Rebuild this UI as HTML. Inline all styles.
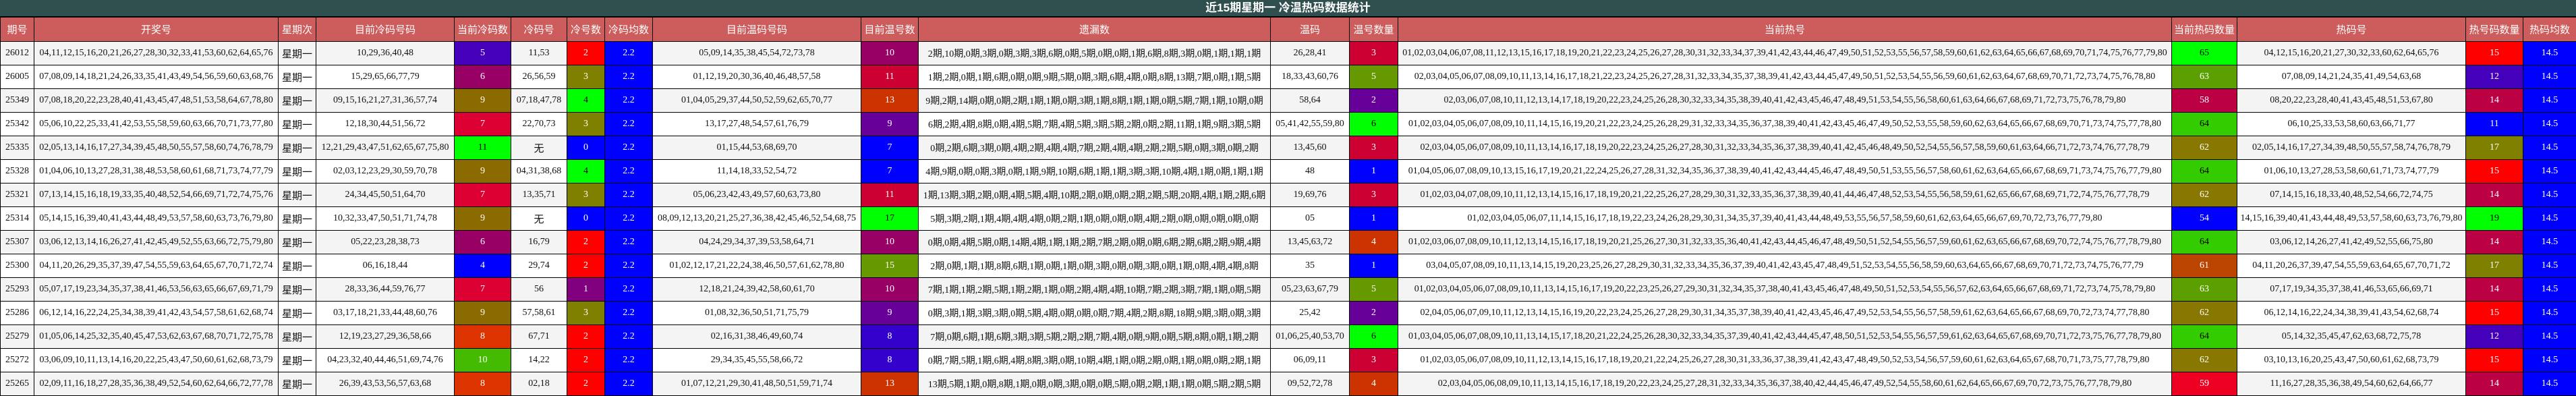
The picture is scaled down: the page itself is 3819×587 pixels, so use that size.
<!DOCTYPE html>
<html><head><meta charset="utf-8">
<style>
html,body{margin:0;padding:0;background:#fff;}
body{width:3819px;height:587px;overflow:hidden;}
.title{height:24px;background:#2f4f4f;border-bottom:1px solid #000;color:#fff;font:bold 17px "Liberation Sans","Noto Sans CJK SC",sans-serif;text-align:center;line-height:24px;}
table{border-collapse:collapse;table-layout:fixed;width:3819px;}
th{background:#cd5c5c;color:#fff;font:15px "Liberation Sans","Noto Sans CJK SC",sans-serif;height:35px;padding:0;border:1px solid #000;font-weight:normal;white-space:nowrap;overflow:hidden;}
td{height:34px;padding:0;border:1px solid #000;text-align:center;font:14px "Liberation Serif","Noto Sans CJK SC",serif;color:#111;white-space:nowrap;overflow:hidden;}
tr:nth-child(odd) td{background:#f4f4f4;}
tr:nth-child(even) td{background:#fff;}
td.wk{font:15px "Liberation Sans","Noto Sans CJK SC",sans-serif;}
td.c{color:#fff;}
tr td.pb{background:#4400bb}tr td.mg{background:#990066}tr td.br{background:#8b6b00}tr td.cr{background:#dd0033}
tr td.g{background:#00ff00;color:#000}tr td.b{background:#0000ff}tr td.or{background:#dd3300}tr td.lg{background:#44bb00}
tr td.r{background:#ff0000}tr td.ol{background:#808000}tr td.pu{background:#800080}tr td.rr{background:#cc0033}
tr td.ro{background:#cc3300}tr td.vi{background:#660099}tr td.og{background:#669900}tr td.ib{background:#3300cc}
tr td.hg{background:#5ba000}tr td.mr{background:#bb0044}tr td.g2{background:#33cc00;color:#000}tr td.ho{background:#887700}
tr td.bo{background:#bb4400}tr td.er{background:#ee0022}
</style></head><body>
<div class="title">近15期星期一 冷温热码数据统计</div>
<table>
<colgroup><col style="width:50px"><col style="width:362px"><col style="width:56px"><col style="width:205px"><col style="width:84px"><col style="width:83px"><col style="width:56px"><col style="width:71px"><col style="width:309px"><col style="width:85px"><col style="width:522px"><col style="width:117px"><col style="width:72px"><col style="width:1147px"><col style="width:97px"><col style="width:339px"><col style="width:85px"><col style="width:79px"></colgroup>
<thead><tr><th>期号</th><th>开奖号</th><th>星期次</th><th>目前冷码号码</th><th>当前冷码数</th><th>冷码号</th><th>冷号数</th><th>冷码均数</th><th>目前温码号码</th><th>目前温号数</th><th>遗漏数</th><th>温码</th><th>温号数量</th><th>当前热号</th><th>当前热码数量</th><th>热码号</th><th>热号码数量</th><th>热码均数</th></tr></thead>
<tbody>
<tr><td>26012</td><td>04,11,12,15,16,20,21,26,27,28,30,32,33,41,53,60,62,64,65,76</td><td class="wk">星期一</td><td>10,29,36,40,48</td><td class="c pb">5</td><td>11,53</td><td class="c r">2</td><td class="c b">2.2</td><td>05,09,14,35,38,45,54,72,73,78</td><td class="c mg">10</td><td>2期,10期,0期,3期,0期,3期,3期,6期,0期,5期,0期,0期,1期,6期,8期,3期,0期,1期,1期,1期</td><td>26,28,41</td><td class="c rr">3</td><td>01,02,03,04,06,07,08,11,12,13,15,16,17,18,19,20,21,22,23,24,25,26,27,28,30,31,32,33,34,37,39,41,42,43,44,46,47,49,50,51,52,53,55,56,57,58,59,60,61,62,63,64,65,66,67,68,69,70,71,74,75,76,77,79,80</td><td class="g">65</td><td>04,12,15,16,20,21,27,30,32,33,60,62,64,65,76</td><td class="c r">15</td><td class="c b">14.5</td></tr>
<tr><td>26005</td><td>07,08,09,14,18,21,24,26,33,35,41,43,49,54,56,59,60,63,68,76</td><td class="wk">星期一</td><td>15,29,65,66,77,79</td><td class="c mg">6</td><td>26,56,59</td><td class="c ol">3</td><td class="c b">2.2</td><td>01,12,19,20,30,36,40,46,48,57,58</td><td class="c rr">11</td><td>1期,2期,0期,1期,6期,0期,0期,9期,5期,0期,3期,6期,4期,0期,8期,13期,7期,0期,1期,5期</td><td>18,33,43,60,76</td><td class="c og">5</td><td>02,03,04,05,06,07,08,09,10,11,13,14,16,17,18,21,22,23,24,25,26,27,28,31,32,33,34,35,37,38,39,41,42,43,44,45,47,49,50,51,52,53,54,55,56,59,60,61,62,63,64,67,68,69,70,71,72,73,74,75,76,78,80</td><td class="c hg">63</td><td>07,08,09,14,21,24,35,41,49,54,63,68</td><td class="c pb">12</td><td class="c b">14.5</td></tr>
<tr><td>25349</td><td>07,08,18,20,22,23,28,40,41,43,45,47,48,51,53,58,64,67,78,80</td><td class="wk">星期一</td><td>09,15,16,21,27,31,36,57,74</td><td class="c br">9</td><td>07,18,47,78</td><td class="g">4</td><td class="c b">2.2</td><td>01,04,05,29,37,44,50,52,59,62,65,70,77</td><td class="c ro">13</td><td>9期,2期,14期,0期,0期,2期,1期,1期,0期,3期,1期,8期,1期,1期,0期,5期,7期,1期,10期,0期</td><td>58,64</td><td class="c vi">2</td><td>02,03,06,07,08,10,11,12,13,14,17,18,19,20,22,23,24,25,26,28,30,32,33,34,35,38,39,40,41,42,43,45,46,47,48,49,51,53,54,55,56,58,60,61,63,64,66,67,68,69,71,72,73,75,76,78,79,80</td><td class="c mr">58</td><td>08,20,22,23,28,40,41,43,45,48,51,53,67,80</td><td class="c mr">14</td><td class="c b">14.5</td></tr>
<tr><td>25342</td><td>05,06,10,22,25,33,41,42,53,55,58,59,60,63,66,70,71,73,77,80</td><td class="wk">星期一</td><td>12,18,30,44,51,56,72</td><td class="c cr">7</td><td>22,70,73</td><td class="c ol">3</td><td class="c b">2.2</td><td>13,17,27,48,54,57,61,76,79</td><td class="c vi">9</td><td>6期,2期,4期,8期,0期,4期,5期,7期,4期,5期,3期,5期,2期,0期,2期,11期,1期,9期,3期,5期</td><td>05,41,42,55,59,80</td><td class="g">6</td><td>01,02,03,04,05,06,07,08,09,10,11,14,15,16,19,20,21,22,23,24,25,26,28,29,31,32,33,34,35,36,37,38,39,40,41,42,43,45,46,47,49,50,52,53,55,58,59,60,62,63,64,65,66,67,68,69,70,71,73,74,75,77,78,80</td><td class="g2">64</td><td>06,10,25,33,53,58,60,63,66,71,77</td><td class="c b">11</td><td class="c b">14.5</td></tr>
<tr><td>25335</td><td>02,05,13,14,16,17,27,34,39,45,48,50,55,57,58,60,74,76,78,79</td><td class="wk">星期一</td><td>12,21,29,43,47,51,62,65,67,75,80</td><td class="g">11</td><td class="wk">无</td><td class="c b">0</td><td class="c b">2.2</td><td>01,15,44,53,68,69,70</td><td class="c b">7</td><td>0期,2期,6期,3期,0期,4期,2期,4期,4期,7期,2期,4期,4期,2期,2期,5期,0期,3期,0期,2期</td><td>13,45,60</td><td class="c rr">3</td><td>02,03,04,05,06,07,08,09,10,11,13,14,16,17,18,19,20,22,23,24,25,26,27,28,30,31,32,33,34,35,36,37,38,39,40,41,42,45,46,48,49,50,52,54,55,56,57,58,59,60,61,63,64,66,71,72,73,74,76,77,78,79</td><td class="c ho">62</td><td>02,05,14,16,17,27,34,39,48,50,55,57,58,74,76,78,79</td><td class="c ol">17</td><td class="c b">14.5</td></tr>
<tr><td>25328</td><td>01,04,06,10,13,27,28,31,38,48,53,58,60,61,68,71,73,74,77,79</td><td class="wk">星期一</td><td>02,03,12,23,29,30,59,70,78</td><td class="c br">9</td><td>04,31,38,68</td><td class="g">4</td><td class="c b">2.2</td><td>11,14,18,33,52,54,72</td><td class="c b">7</td><td>4期,9期,0期,0期,3期,0期,1期,9期,10期,6期,1期,1期,3期,3期,10期,4期,1期,0期,1期,1期</td><td>48</td><td class="c b">1</td><td>01,04,05,06,07,08,09,10,13,15,16,17,19,20,21,22,24,25,26,27,28,31,32,34,35,36,37,38,39,40,41,42,43,44,45,46,47,48,49,50,51,53,55,56,57,58,60,61,62,63,64,65,66,67,68,69,71,73,74,75,76,77,79,80</td><td class="g2">64</td><td>01,06,10,13,27,28,53,58,60,61,71,73,74,77,79</td><td class="c r">15</td><td class="c b">14.5</td></tr>
<tr><td>25321</td><td>07,13,14,15,16,18,19,33,35,40,48,52,54,66,69,71,72,74,75,76</td><td class="wk">星期一</td><td>24,34,45,50,51,64,70</td><td class="c cr">7</td><td>13,35,71</td><td class="c ol">3</td><td class="c b">2.2</td><td>05,06,23,42,43,49,57,60,63,73,80</td><td class="c rr">11</td><td>1期,13期,3期,2期,0期,4期,5期,4期,10期,2期,0期,0期,2期,2期,5期,20期,4期,1期,2期,6期</td><td>19,69,76</td><td class="c rr">3</td><td>01,02,03,04,07,08,09,10,11,12,13,14,15,16,17,18,19,20,21,22,25,26,27,28,29,30,31,32,33,35,36,37,38,39,40,41,44,46,47,48,52,53,54,55,56,58,59,61,62,65,66,67,68,69,71,72,74,75,76,77,78,79</td><td class="c ho">62</td><td>07,14,15,16,18,33,40,48,52,54,66,72,74,75</td><td class="c mr">14</td><td class="c b">14.5</td></tr>
<tr><td>25314</td><td>05,14,15,16,39,40,41,43,44,48,49,53,57,58,60,63,73,76,79,80</td><td class="wk">星期一</td><td>10,32,33,47,50,51,71,74,78</td><td class="c br">9</td><td class="wk">无</td><td class="c b">0</td><td class="c b">2.2</td><td>08,09,12,13,20,21,25,27,36,38,42,45,46,52,54,68,75</td><td class="g">17</td><td>5期,3期,2期,1期,4期,4期,4期,0期,2期,1期,0期,0期,0期,4期,2期,0期,0期,0期,0期,0期</td><td>05</td><td class="c b">1</td><td>01,02,03,04,05,06,07,11,14,15,16,17,18,19,22,23,24,26,28,29,30,31,34,35,37,39,40,41,43,44,48,49,53,55,56,57,58,59,60,61,62,63,64,65,66,67,69,70,72,73,76,77,79,80</td><td class="c b">54</td><td>14,15,16,39,40,41,43,44,48,49,53,57,58,60,63,73,76,79,80</td><td class="g">19</td><td class="c b">14.5</td></tr>
<tr><td>25307</td><td>03,06,12,13,14,16,26,27,41,42,45,49,52,55,63,66,72,75,79,80</td><td class="wk">星期一</td><td>05,22,23,28,38,73</td><td class="c mg">6</td><td>16,79</td><td class="c r">2</td><td class="c b">2.2</td><td>04,24,29,34,37,39,53,58,64,71</td><td class="c mg">10</td><td>0期,0期,4期,5期,0期,14期,4期,1期,1期,2期,7期,2期,0期,0期,6期,2期,6期,2期,9期,4期</td><td>13,45,63,72</td><td class="c ro">4</td><td>01,02,03,06,07,08,09,10,11,12,13,14,15,16,17,18,19,20,21,25,26,27,30,31,32,33,35,36,40,41,42,43,44,45,46,47,48,49,50,51,52,54,55,56,57,59,60,61,62,63,65,66,67,68,69,70,72,74,75,76,77,78,79,80</td><td class="g2">64</td><td>03,06,12,14,26,27,41,42,49,52,55,66,75,80</td><td class="c mr">14</td><td class="c b">14.5</td></tr>
<tr><td>25300</td><td>04,11,20,26,29,35,37,39,47,54,55,59,63,64,65,67,70,71,72,74</td><td class="wk">星期一</td><td>06,16,18,44</td><td class="c b">4</td><td>29,74</td><td class="c r">2</td><td class="c b">2.2</td><td>01,02,12,17,21,22,24,38,46,50,57,61,62,78,80</td><td class="c og">15</td><td>2期,0期,1期,1期,8期,6期,1期,0期,1期,0期,3期,0期,0期,3期,0期,1期,0期,4期,4期,8期</td><td>35</td><td class="c b">1</td><td>03,04,05,07,08,09,10,11,13,14,15,19,20,23,25,26,27,28,29,30,31,32,33,34,35,36,37,39,40,41,42,43,45,47,48,49,51,52,53,54,55,56,58,59,60,63,64,65,66,67,68,69,70,71,72,73,74,75,76,77,79</td><td class="c bo">61</td><td>04,11,20,26,37,39,47,54,55,59,63,64,65,67,70,71,72</td><td class="c ol">17</td><td class="c b">14.5</td></tr>
<tr><td>25293</td><td>05,07,17,19,23,34,35,37,38,41,46,53,56,63,65,66,67,69,71,79</td><td class="wk">星期一</td><td>28,33,36,44,59,76,77</td><td class="c cr">7</td><td>56</td><td class="c pu">1</td><td class="c b">2.2</td><td>12,18,21,24,39,42,58,60,61,70</td><td class="c mg">10</td><td>7期,1期,1期,2期,5期,1期,2期,1期,0期,2期,4期,4期,10期,7期,2期,3期,7期,1期,0期,5期</td><td>05,23,63,67,79</td><td class="c og">5</td><td>01,02,03,04,05,06,07,08,09,10,11,13,14,15,16,17,19,20,22,23,25,26,27,29,30,31,32,34,35,37,38,40,41,43,45,46,47,48,49,50,51,52,53,54,55,56,57,62,63,64,65,66,67,68,69,71,72,73,74,75,78,79,80</td><td class="c hg">63</td><td>07,17,19,34,35,37,38,41,46,53,65,66,69,71</td><td class="c mr">14</td><td class="c b">14.5</td></tr>
<tr><td>25286</td><td>06,12,14,16,22,24,25,34,38,39,41,42,43,54,57,58,61,62,68,74</td><td class="wk">星期一</td><td>03,17,18,21,33,44,48,60,76</td><td class="c br">9</td><td>57,58,61</td><td class="c ol">3</td><td class="c b">2.2</td><td>01,08,32,36,50,51,71,75,79</td><td class="c vi">9</td><td>0期,3期,1期,3期,3期,0期,5期,4期,0期,0期,0期,7期,4期,2期,8期,18期,9期,3期,0期,3期</td><td>25,42</td><td class="c vi">2</td><td>02,04,05,06,07,09,10,11,12,13,14,15,16,19,20,22,23,24,25,26,27,28,29,30,31,34,35,37,38,39,40,41,42,43,45,46,47,49,52,53,54,55,56,57,58,59,61,62,63,64,65,66,67,68,69,70,72,73,74,77,78,80</td><td class="c ho">62</td><td>06,12,14,16,22,24,34,38,39,41,43,54,62,68,74</td><td class="c r">15</td><td class="c b">14.5</td></tr>
<tr><td>25279</td><td>01,05,06,14,25,32,35,40,45,47,53,62,63,67,68,70,71,72,75,78</td><td class="wk">星期一</td><td>12,19,23,27,29,36,58,66</td><td class="c or">8</td><td>67,71</td><td class="c r">2</td><td class="c b">2.2</td><td>02,16,31,38,46,49,60,74</td><td class="c ib">8</td><td>7期,0期,6期,1期,6期,3期,3期,5期,2期,2期,7期,4期,0期,9期,0期,5期,8期,0期,1期,2期</td><td>01,06,25,40,53,70</td><td class="g">6</td><td>01,03,04,05,06,07,08,09,10,11,13,14,15,17,18,20,21,22,24,25,26,28,30,32,33,34,35,37,39,40,41,42,43,44,45,47,48,50,51,52,53,54,55,56,57,59,61,62,63,64,65,67,68,69,70,71,72,73,75,76,77,78,79,80</td><td class="g2">64</td><td>05,14,32,35,45,47,62,63,68,72,75,78</td><td class="c pb">12</td><td class="c b">14.5</td></tr>
<tr><td>25272</td><td>03,06,09,10,11,13,14,16,20,22,25,43,47,50,60,61,62,68,73,79</td><td class="wk">星期一</td><td>04,23,32,40,44,46,51,69,74,76</td><td class="c lg">10</td><td>14,22</td><td class="c r">2</td><td class="c b">2.2</td><td>29,34,35,45,55,58,66,72</td><td class="c ib">8</td><td>0期,7期,5期,1期,6期,4期,8期,3期,0期,10期,4期,1期,0期,2期,0期,1期,0期,0期,2期,1期</td><td>06,09,11</td><td class="c rr">3</td><td>01,02,03,05,06,07,08,09,10,11,12,13,14,15,16,17,18,19,20,21,22,24,25,26,27,28,30,31,33,36,37,38,39,41,42,43,47,48,49,50,52,53,54,56,57,59,60,61,62,63,64,65,67,68,70,71,73,75,77,78,79,80</td><td class="c ho">62</td><td>03,10,13,16,20,25,43,47,50,60,61,62,68,73,79</td><td class="c r">15</td><td class="c b">14.5</td></tr>
<tr><td>25265</td><td>02,09,11,16,18,27,28,35,36,38,49,52,54,60,62,64,66,72,77,78</td><td class="wk">星期一</td><td>26,39,43,53,56,57,63,68</td><td class="c or">8</td><td>02,18</td><td class="c r">2</td><td class="c b">2.2</td><td>01,07,12,21,29,30,41,48,50,51,59,71,74</td><td class="c ro">13</td><td>13期,5期,1期,0期,8期,1期,0期,0期,3期,0期,0期,5期,0期,2期,1期,1期,0期,5期,2期,5期</td><td>09,52,72,78</td><td class="c ro">4</td><td>02,03,04,05,06,08,09,10,11,13,14,15,16,17,18,19,20,22,23,24,25,27,28,31,32,33,34,35,36,37,38,40,42,44,45,46,47,49,52,54,55,58,60,61,62,64,65,66,67,69,70,72,73,75,76,77,78,79,80</td><td class="c er">59</td><td>11,16,27,28,35,36,38,49,54,60,62,64,66,77</td><td class="c mr">14</td><td class="c b">14.5</td></tr>
</tbody></table>
</body></html>
